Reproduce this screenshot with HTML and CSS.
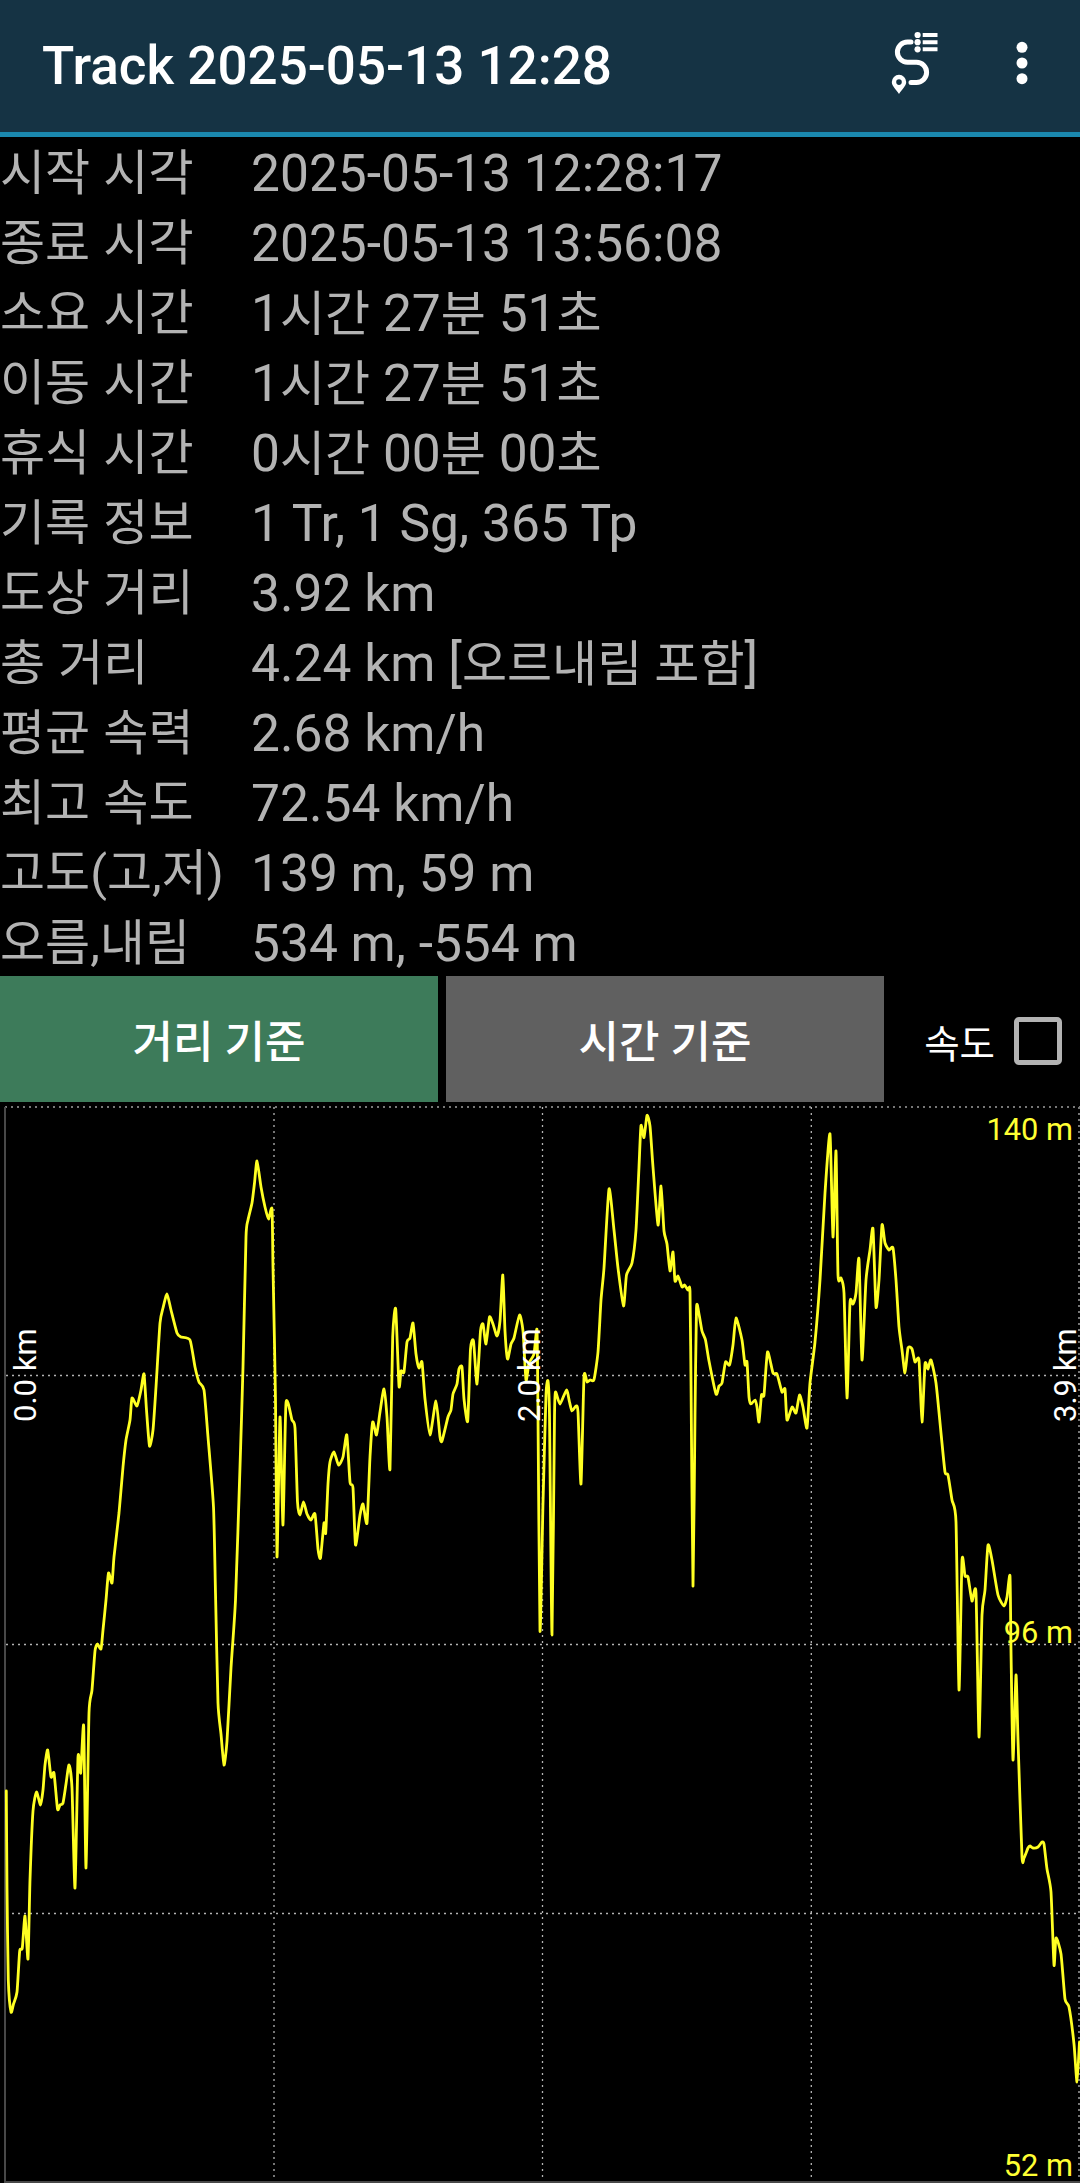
FILE: index.html
```html
<!DOCTYPE html>
<html lang="ko">
<head>
    <title>Track 2025-05-13 12:28</title>
    <meta charset="UTF-8">
    <meta name="viewport" content="width=device-width, initial-scale=1.0">
    <link rel="stylesheet" href="styles.css">
</head>

<body>
    <header class="topbar">
        <h1 class="title">Track 2025-05-13 12:28</h1>
        <svg class="icon-track" viewBox="30 30 50 66" width="50" height="66">
            <path class="route" d="M51 42H47.5a10.1 10.1 0 0 0 0 20.2H56.5a10.1 10.1 0 0 1 0 20.2H51"/>
            <circle cx="57.6" cy="35" r="3.1"/>
            <circle cx="57.6" cy="42.2" r="3.1"/>
            <circle cx="57.6" cy="49.3" r="3.1"/>
            <path d="M62.7 33h14.8v4H62.7zM62.7 40.2h14.8v4H62.7zM62.7 47.3h14.8v4H62.7z"/>
            <path fill-rule="evenodd" d="M39 94C36 89.5 31.8 86 31.8 82a7.2 7.2 0 0 1 14.4 0C46.2 86 42 89.5 39 94zM39 79.3a2.8 2.8 0 1 0 0 5.6a2.8 2.8 0 1 0 0-5.6z"/>
        </svg>
        <svg class="icon-menu" viewBox="0 0 12 44" width="12" height="44">
            <circle cx="6" cy="6.3" r="5.5"/>
            <circle cx="6" cy="22" r="5.5"/>
            <circle cx="6" cy="37.7" r="5.5"/>
        </svg>
    </header>

    <dl class="info">
        <dt>시작 시각</dt><dd>2025-05-13 12:28:17</dd>
        <dt>종료 시각</dt><dd>2025-05-13 13:56:08</dd>
        <dt>소요 시간</dt><dd>1<span class="ko">시간</span> 27<span class="ko">분</span> 51<span class="ko">초</span></dd>
        <dt>이동 시간</dt><dd>1<span class="ko">시간</span> 27<span class="ko">분</span> 51<span class="ko">초</span></dd>
        <dt>휴식 시간</dt><dd>0<span class="ko">시간</span> 00<span class="ko">분</span> 00<span class="ko">초</span></dd>
        <dt>기록 정보</dt><dd>1 Tr, 1 Sg, 365 Tp</dd>
        <dt>도상 거리</dt><dd>3.92 km</dd>
        <dt>총 거리</dt><dd>4.24 km [<span class="ko">오르내림 포함</span>]</dd>
        <dt>평균 속력</dt><dd>2.68 km/h</dd>
        <dt>최고 속도</dt><dd>72.54 km/h</dd>
        <dt>고도(고,저)</dt><dd>139 m, 59 m</dd>
        <dt>오름,내림</dt><dd>534 m, -554 m</dd>
    </dl>

    <div class="controls">
        <button class="btn active" type="button">거리 기준</button>
        <button class="btn" type="button">시간 기준</button>
        <label class="speed">속도 <input type="checkbox" class="check"></label>
    </div>

    <svg class="chart" viewBox="0 2 1080 1081" width="1080" height="1081">
        <g class="grid">
            <path class="outer" d="M5 7H1080M1079 7V1082"/>
            <path d="M6 275.5H1080M6 544.5H1080M6 813.5H1080"/>
            <path d="M274 7V1082M542.5 7V1082M811.3 7V1082"/>
        </g>
        <path class="axis" d="M5 7V1082H1080"/>
        <path class="line" id="line"/>
        <g class="alt">
            <text x="1073" y="40">140 m</text>
            <text x="1073" y="543">96 m</text>
            <text x="1073" y="1076">52 m</text>
        </g>
        <g class="dist">
            <text transform="translate(36 322) rotate(-90)">0.0 km</text>
            <text transform="translate(540 322) rotate(-90)">2.0 km</text>
            <text transform="translate(1076 322) rotate(-90)">3.9 km</text>
        </g>
    </svg>

    <script src="chart.js"></script>
</body>
</html>
```

FILE: styles.css
```css
body {
    margin: 0;
    background-color: #000;
    color: #b3b3b3;
    font-family: Roboto, "Noto Sans CJK KR", sans-serif;
}

/* Barre du haut */
.topbar {
    display: flex;
    align-items: center;
    box-sizing: border-box;
    height: 137px;
    padding: 0 52px 6px 42px;
    background-color: #153344;
    border-bottom: 5px solid #1a88ae;
}

.title {
    flex: 1;
    margin: 0;
    padding-top: 5px;
    color: #fff;
    font-size: 53px;
    font-weight: 500;
    white-space: nowrap;
}

.topbar svg {
    fill: #fff;
}

.icon-track {
    margin-right: 76px;
}

.icon-track .route {
    fill: none;
    stroke: #fff;
    stroke-width: 5;
    stroke-linecap: round;
}

/* Informations */
.info {
    display: grid;
    grid-template-columns: 251px 1fr;
    grid-auto-rows: 70px;
    box-sizing: border-box;
    height: 839px;
    margin: 0;
    padding-top: 2px;
    font-size: 51.5px;
    line-height: 70px;
    white-space: nowrap;
}

.info dt {
    font-size: 49px;
    word-spacing: 1px;
}

.info dd {
    margin: 0;
}

.info .ko {
    font-size: 49px;
    line-height: 1;
}

/* Boutons */
.controls {
    display: flex;
    height: 126px;
}

.btn {
    width: 438px;
    margin-right: 8px;
    padding: 0;
    border: none;
    background-color: #606060;
    color: #fff;
    font-family: inherit;
    font-size: 44px;
    font-weight: 500;
}

.btn.active {
    background-color: #3d7b5a;
}

.speed {
    display: flex;
    flex: 1;
    align-items: center;
    justify-content: flex-end;
    gap: 19px;
    padding-right: 18px;
    padding-top: 3px;
    color: #fff;
    font-size: 38.5px;
}

.check {
    appearance: none;
    box-sizing: border-box;
    width: 48px;
    height: 48px;
    margin: 0;
    border: 5px solid #b3b3b3;
    border-radius: 5px;
}

/* Graphique */
.chart {
    display: block;
}

.grid path {
    fill: none;
    stroke: #b4b4b4;
    stroke-width: 1.3;
    stroke-dasharray: 2 4;
}

.grid .outer {
    stroke: #777;
    stroke-width: 2;
}

.axis {
    fill: none;
    stroke: #484848;
    stroke-width: 2;
}

.line {
    fill: none;
    stroke: #ffff22;
    stroke-width: 2.8;
    stroke-linejoin: round;
    stroke-linecap: round;
}

.alt {
    fill: #ffff33;
    font-size: 30.8px;
    text-anchor: end;
}

.dist {
    fill: #fff;
    font-size: 31px;
}
```

FILE: chart.js
```js
const points = [
    [6.3,691],[7,788],[8.3,880],[11,912],[13.5,904],[17,892],[19.7,851],[22.3,848],[25,816],[28,859],
    [30,780],[33,711],[36.5,692],[40.5,705],[43,690],[45,665],[47.7,650],[51,677],[54,673],[57.5,709],
    [60,705],[63,703],[66,684],[69,665],[72,688],[75,788],[78,657],[80.7,673],[83.7,626],[86,768],
    [89,613],[92,590],[95,551],[97.5,544],[101,549],[103,530],[106,500],[108.5,473],[112,483],[114,457],
    [119,413],[123,367],[126,340],[130,320],[132,298],[137,306],[141,290],[144,274],[146.5,310],[149.5,346],
    [153,330],[156,287],[160,223],[163,208],[167,194],[171,210],[177,233],[181,237],[190,240],[195,267],
    [199,282],[204,290],[208,337],[213.5,407],[215.5,493],[218,603],[221,634],[224,665],[227,641],[231,568],
    [235.5,500],[240,367],[243,267],[246,137],[248,120],[252,103],[254.5,83],[257,61],[261,87],[265,107],
    [268.5,119],[272,109],[273,167],[275.5,300],[277,457],[280,317],[283,425],[286,303],[292,320],[295,328],
    [297.5,402],[300,415],[303.5,402],[307,414],[311,420],[315,414],[318,449],[320.5,458],[324,423],[325.7,433],
    [328,384],[330,362],[334,352],[338.5,365],[343,357],[346.8,335],[350,382],[353,388],[355.5,445],[360,415],
    [363,404],[367,423],[370,357],[372.7,322],[376.5,335],[380,312],[384,289],[387,317],[390,369],[392.7,237],
    [395.7,209],[399,286],[401,271],[404,272],[407,242],[410,238],[413,223],[416,254],[419,268],[422,262],
    [425,299],[430,335],[436,301],[440,337],[442,341],[448,317],[451,310],[453,294],[457,284],[459,269],
    [462,267],[464,299],[467.7,321],[470.5,249],[473.5,241],[477,284],[480.5,231],[483,224],[486,244],[489.5,217],
    [493,224],[497,236],[500,221],[502.8,175],[505,231],[507.5,259],[511,244],[514,238],[519.5,215],[523,231],
    [526,280],[529,263],[534,254],[537,230],[538,316],[540,531],[543,403],[546,295],[548,281],[549.5,316],
    [552,535],[554.5,316],[555.5,292],[560,304],[566.5,290],[569.5,302],[572,311],[576,306],[578,312],[581,384],
    [584,277],[587,282],[590,280],[594,279.5],[598,252],[601,200],[604,168],[609,89],[614,130],[618,168],
    [623.5,206],[626.5,175],[632,163],[636,130],[639,67],[641,25.6],[644,37.5],[647,15.4],[650,26],[653,67],
    [658,125],[661,86],[664,131],[667,144],[670,171],[673,152],[675,181],[678,176],[682,187],[684.5,185],
    [688,190],[690,191],[691,281],[693,486],[695,316],[696.5,208],[699,214],[702,231],[705.5,240],[709,261],
    [716,294],[719,286],[722,283],[725.5,262],[729.5,265],[733,245],[736,218],[742,240],[745,265],[747,262],
    [749,297],[751,304],[755,300],[757,307],[759,322],[761.5,295],[764,295],[767.5,252],[773,273],[777,274],
    [782,292],[785,289],[787,320],[792,307],[796,313],[799.5,295],[803,307],[807,328],[810,283],[815,242],
    [820,180],[825,93],[830,34],[833,137],[836,51],[838,175],[841,178],[844,193],[847,298],[850,203],
    [853,204],[856,193],[859,159],[862,260],[866,180],[870,150],[873,129],[876,207],[879,180],[882,125],
    [885,143],[889,150],[893,148],[896,180],[899,227],[902,250],[905,273],[908,248],[912,249],[915,262],
    [919,260],[922,322],[925,264],[928,269],[931,260],[936,283],[941,333],[945,372],[948,375],[952,400],
    [956,422],[959,590],[962,460],[965,476],[968,477],[972,501],[976,493],[979,637],[982,515],[985,490],
    [988,445],[992,460],[998,495],[1004,506],[1007,497],[1010,476],[1011,550],[1013,660],[1016,575],[1018,640],
    [1022,757],[1024,758],[1028,748],[1030,746],[1033,748],[1038,747],[1042,742],[1044,744],[1047,769],[1051,792],
    [1054,865],[1056,838],[1061,854],[1065,899],[1069,907],[1074,944],[1077,982],[1079.5,942]
];

// Courbe lissée entre les points
const k = 0.1;
let d = 'M' + points[0];
for (let i = 1; i < points.length; i++) {
    const p0 = points[i - 2] || points[i - 1];
    const p1 = points[i - 1];
    const p2 = points[i];
    const p3 = points[i + 1] || p2;
    const c1 = [p1[0] + (p2[0] - p0[0]) * k, p1[1] + (p2[1] - p0[1]) * k];
    const c2 = [p2[0] - (p3[0] - p1[0]) * k, p2[1] - (p3[1] - p1[1]) * k];
    d += 'C' + c1 + ' ' + c2 + ' ' + p2;
}
document.getElementById('line').setAttribute('d', d);
```
